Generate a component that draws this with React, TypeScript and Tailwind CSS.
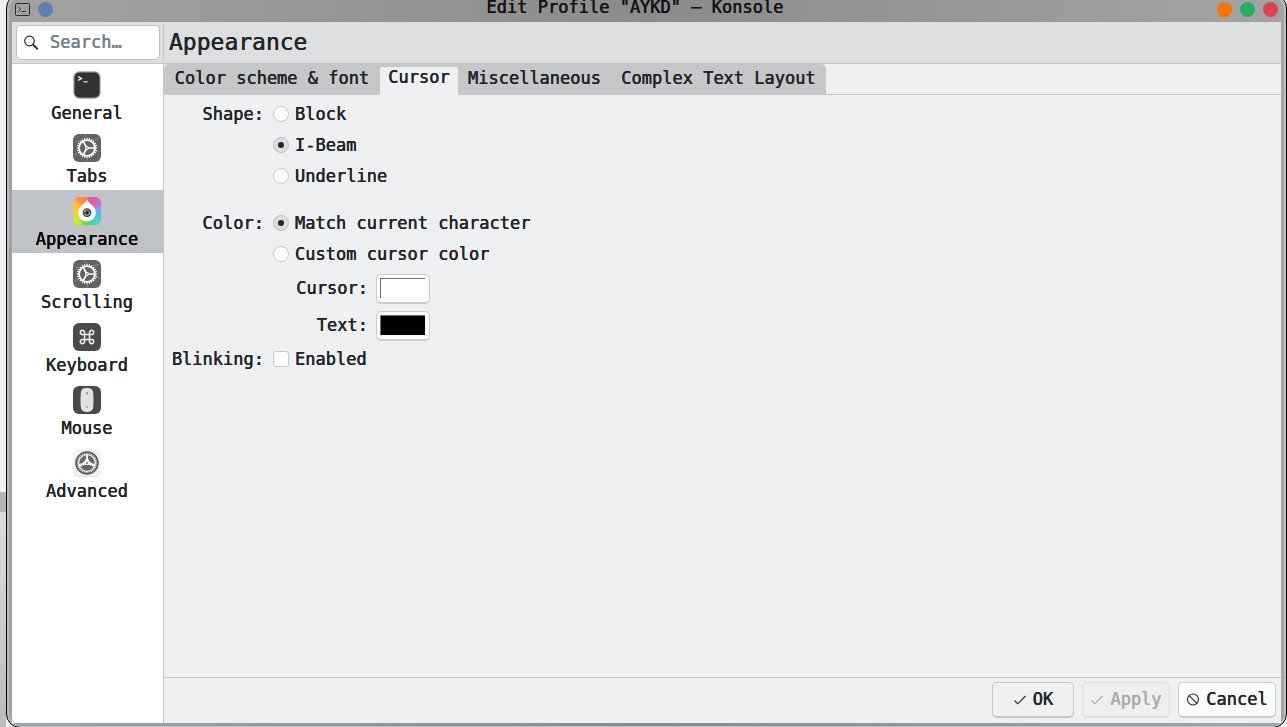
import React, { useState } from "react";

type IconProps = { className?: string };

function TerminalIcon() {
  return (
    <svg viewBox="0 0 28 28" className="size-7" aria-hidden="true">
      <rect x="0.3" y="0.3" width="27.4" height="27.4" rx="6" fill="#a3a3a3" />
      <rect x="1.5" y="1.5" width="25" height="25" rx="5" fill="#323232" />
      <path d="M5 5.6l3.6 1.9L5 9.4" fill="none" stroke="#f4f4f4" strokeWidth="1.2" />
      <path d="M10.3 10.8h4.4" stroke="#d6d6d6" strokeWidth="1.3" />
    </svg>
  );
}

function Teeth({ count, inner, outer, color, width }: { count: number; inner: number; outer: number; color: string; width: number }) {
  return (
    <g stroke={color} strokeWidth={width}>
      {Array.from({ length: count }, (_, i) => (
        <path key={i} d={`M14 ${14 - inner}V${14 - outer}`} transform={`rotate(${(i * 360) / count} 14 14)`} />
      ))}
    </g>
  );
}

function GearIcon() {
  return (
    <svg viewBox="0 0 28 28" className="size-7" aria-hidden="true">
      <rect width="28" height="28" rx="6" fill="#636363" />
      <g stroke="#8a8a8a" strokeWidth="0.9">
        <path d="M1 6.5l5 1.5M12 0.5l1 3M20 6l6-1.5M22 17l5 .8M14.5 24l-.5 3.5M1 21l5-2" />
      </g>
      <circle cx="14" cy="14" r="7.9" fill="none" stroke="#fff" strokeWidth="1.7" />
      <Teeth count={24} inner={8} outer={10.2} color="#fff" width={1.1} />
      <path d="M14 14h8M14 14l-4-6.9M14 14l-4 6.9" stroke="#fff" strokeWidth="1.7" />
      <circle cx="14" cy="14" r="1.9" fill="#fff" />
      <circle cx="14" cy="14" r="0.8" fill="#636363" />
    </svg>
  );
}

function PaletteIcon() {
  return (
    <svg viewBox="0 0 28 28" className="size-7" aria-hidden="true">
      <defs>
        <clipPath id="tile"><rect width="28" height="28" rx="6" /></clipPath>
        <filter id="soft" x="-30%" y="-30%" width="160%" height="160%"><feGaussianBlur stdDeviation="2.2" /></filter>
      </defs>
      <g clipPath="url(#tile)">
        <rect width="28" height="28" fill="#e9a04c" />
        <g filter="url(#soft)">
          <path d="M14 14L-6-6H14z" fill="#ff8a3c" />
          <path d="M14 14V-8H36z" fill="#ee4f9c" />
          <path d="M14 14L34-6V10z" fill="#b06fd8" />
          <path d="M14 14L36 8V26z" fill="#4cb8f0" />
          <path d="M14 14L36 26V36H20z" fill="#41dcc0" />
          <path d="M14 14L24 36H4z" fill="#55dd55" />
          <path d="M14 14L4 36H-8V16z" fill="#c8e83c" />
          <path d="M14 14L-8 20V-4z" fill="#ffc93a" />
        </g>
      </g>
      <path d="M14 2.8c1.6 2.8 4 4.4 6.2 6.400a8.900 8.900 0 1 1-12.400 0C10 7.200 12.400 5.600 14 2.800z" fill="#fff" />
      <circle cx="14" cy="15.6" r="4.3" fill="#333" />
      <g fill="none" strokeWidth="1.7">
        <path d="M11.4 15.6a2.6 2.6 0 0 1 1.8-2.5" stroke="#d9a441" />
        <path d="M13.5 13a2.6 2.6 0 0 1 2.9 1.5" stroke="#d64f94" />
        <path d="M16.5 15a2.6 2.6 0 0 1-1.5 3" stroke="#3eb4cf" />
        <path d="M14.6 18.2a2.6 2.6 0 0 1-3-1.8" stroke="#59b957" />
      </g>
      <circle cx="14" cy="15.6" r="1.1" fill="#262626" />
    </svg>
  );
}

function CommandIcon() {
  return (
    <svg viewBox="0 0 28 28" className="size-7" aria-hidden="true">
      <rect width="28" height="28" rx="6" fill="#4a4a4a" />
      <path
        d="M11.500 11.500h5v5h-5zM11.500 11.500H9.700a2.100 2.100 0 1 1 1.800-2zM16.500 11.500V9.500a2.100 2.100 0 1 1 1.800 2zM16.500 16.500h1.800a2.100 2.100 0 1 1-1.800 2zM11.500 16.500v2a2.100 2.100 0 1 1-1.800-2z"
        fill="none"
        stroke="#f5f5f5"
        strokeWidth="1.5"
      />
    </svg>
  );
}

function MouseIcon() {
  return (
    <svg viewBox="0 0 28 28" className="size-7" aria-hidden="true">
      <rect width="28" height="28" rx="6" fill="#4a4a4a" />
      <path d="M14 2c3.600 0 5.300 1 5.900 3.400.8 4 .8 13.200 0 17.200C19.300 25 17.600 26 14 26s-5.300-1-5.900-3.400c-.8-4-.8-13.200 0-17.200C8.700 3 10.400 2 14 2z" fill="#e3e3e3" />
      <path d="M14 6v2.600M14 20.300v1.500" stroke="#777" strokeWidth="1.2" />
    </svg>
  );
}

function AdvancedIcon() {
  return (
    <svg viewBox="0 0 28 28" className="size-7" aria-hidden="true">
      <rect y="0.5" width="28" height="27.5" rx="6" fill="#e0e0e0" />
      <rect width="28" height="27" rx="6" fill="#f3f3f3" />
      <circle cx="14" cy="14" r="11" fill="none" stroke="#5b5b5b" strokeWidth="1.6" />
      <g fill="#666">
        <path d="M13 6.200a7.800 7.800 0 0 0-6.600 8.800c2.300-.5 4.600-1.800 5.700-3.800.8-1.500 1.100-3 .9-5z" />
        <path d="M15 6.200a7.800 7.800 0 0 1 6.600 8.800c-2.300-.5-4.600-1.800-5.700-3.800-.8-1.500-1.100-3-.9-5z" />
        <path d="M7.400 18.100a7.800 7.800 0 0 0 13.200 0c-2-1.500-4.200-2.300-6.600-2.300s-4.600.8-6.600 2.300z" />
      </g>
      <Teeth count={32} inner={8.8} outer={10.6} color="#5b5b5b" width={1} />
      <circle cx="14" cy="14" r="1.7" fill="#f3f3f3" />
      <circle cx="14" cy="14" r="0.9" fill="#666" />
    </svg>
  );
}

function CheckIcon({ className }: IconProps) {
  return (
    <svg viewBox="0 0 14 14" className={className} aria-hidden="true">
      <path d="M1.500 8.500l3.300 3.300L12.500 4" fill="none" stroke="currentColor" strokeWidth="1.1" />
    </svg>
  );
}

function ForbiddenIcon({ className }: IconProps) {
  return (
    <svg viewBox="0 0 14 14" className={className} aria-hidden="true">
      <circle cx="7" cy="7.5" r="5.5" fill="none" stroke="currentColor" strokeWidth="1.1" />
      <path d="M3.100 3.600l7.800 7.800" stroke="currentColor" strokeWidth="1.1" />
    </svg>
  );
}

const PAGES = [
  { name: "General", Icon: TerminalIcon },
  { name: "Tabs", Icon: GearIcon },
  { name: "Appearance", Icon: PaletteIcon },
  { name: "Scrolling", Icon: GearIcon },
  { name: "Keyboard", Icon: CommandIcon },
  { name: "Mouse", Icon: MouseIcon },
  { name: "Advanced", Icon: AdvancedIcon },
];

const TABS = [
  { name: "Color scheme & font", width: "min-w-[216px]" },
  { name: "Cursor", width: "min-w-[78px]" },
  { name: "Miscellaneous", width: "min-w-[153px]" },
  { name: "Complex Text Layout", width: "min-w-[215px]" },
];

function Radio({ group, label, checked, onSelect }: { group: string; label: string; checked: boolean; onSelect: () => void }) {
  return (
    <label className="flex h-[31px] w-fit items-center gap-1.5">
      <span className="grid size-4 place-items-center">
        <input
          type="radio"
          name={group}
          checked={checked}
          onChange={onSelect}
          className="col-start-1 row-start-1 size-4 appearance-none rounded-full border border-[#c9cbcd] bg-[#fcfcfc] checked:border-[#bdc0c2] checked:bg-[#dcdfe1]"
        />
        {checked && <span className="pointer-events-none col-start-1 row-start-1 size-1.5 rounded-full bg-[#232629]" />}
      </span>
      {label}
    </label>
  );
}

function Swatch({ id, label, fill }: { id: string; label: string; fill: string }) {
  return (
    <div className="flex h-[37px] items-center gap-2">
      <label htmlFor={id} className="w-[95px] text-right">{label}</label>
      <button id={id} type="button" className="mb-0.5 flex h-[30px] w-[54px] self-end rounded-[5px] border border-b-2 border-[#cbcccd] bg-[#fcfcfc] p-[3px]">
        <span className={`h-5 w-[45px] border-t border-l border-[#6b6b70] ${fill}`} />
      </button>
    </div>
  );
}

export default function App() {
  const [page, setPage] = useState("Appearance");
  const [tab, setTab] = useState("Cursor");
  const [shape, setShape] = useState("I-Beam");
  const [color, setColor] = useState("Match current character");
  const [blink, setBlink] = useState(false);

  return (
    <div className="flex h-screen overflow-hidden bg-[#f1f1f1] font-['DejaVu_Sans_Mono',monospace] text-[17px] leading-6 text-[#232629] [text-shadow:0_0_0_currentColor,0_0_0_currentColor] [&_button]:[text-shadow:inherit] [&_input]:[text-shadow:inherit]">
      <div className="flex w-1.5 shrink-0 flex-col justify-end" aria-hidden="true">
        <div className="h-5 bg-[#b5b5b5]" />
        <div className="h-[215px] bg-linear-to-b from-[#dcdcdc] to-[#bcbcbc]" />
      </div>
      <div className="-mt-1.5 -mb-px flex min-w-0 flex-1 rounded-[14px] border border-black bg-[#b9c0c5]">
        <div className="mx-0.5 mt-0.5 mb-px flex min-w-0 flex-1 flex-col rounded-xl bg-linear-to-r from-[#a2a2a2] via-[#8b8b8b] via-50% to-[#a4a4a4] px-[3px] pb-[3px]">
          <header className="flex h-[25px] shrink-0 items-end gap-2 px-[3px] pb-[5px]">
            <svg viewBox="0 0 15 15" className="size-[15px]" aria-hidden="true">
              <rect x="0.5" y="1.5" width="14" height="12" rx="1" fill="none" stroke="#2c2c2c" />
              <path d="M3.300 5l2.400 2.300-2.400 2.300M6.700 9.500h4" fill="none" stroke="#2c2c2c" />
            </svg>
            <button type="button" aria-label="Pin" className="size-[15px] rounded-full bg-[#5d80ae]" />
            <h1 className="mb-[3px] flex-1 text-center leading-[14px] text-[#141414]">Edit Profile "AYKD" — Konsole</h1>
            <div className="flex gap-2">
              <button type="button" aria-label="Minimize" className="size-[15px] rounded-full bg-[#f67400]" />
              <button type="button" aria-label="Maximize" className="size-[15px] rounded-full bg-[#27ae60]" />
              <button type="button" aria-label="Close" className="size-[15px] rounded-full bg-[#da4453]" />
            </div>
          </header>

          <div className="flex h-[42px] shrink-0 border-b border-[#c3c5c7] bg-[#dedfe1]">
            <div className="my-0.5 flex w-[152px] items-center border-r border-[#c3c5c7] pr-[3px] pl-1">
              <label className="flex h-[35px] w-full items-center gap-[11px] rounded-[5px] border border-[#bfc1c3] bg-white pl-1.5">
                <svg viewBox="0 0 16 16" className="size-4 shrink-0" aria-label="Search">
                  <circle cx="6.5" cy="6" r="4.8" fill="none" stroke="#232629" strokeWidth="1.2" />
                  <path d="M10 9.500l4.800 4.800" stroke="#232629" strokeWidth="1.8" />
                </svg>
                <input type="search" placeholder="Search…" className="w-full min-w-0 bg-transparent pb-0.5 outline-none placeholder:text-[#75818c]" />
              </label>
            </div>
            <h2 className="flex items-center pb-0.5 pl-[5px] text-[23px] leading-7">Appearance</h2>
          </div>

          <div className="flex min-h-0 flex-1">
            <nav className="w-[152px] shrink-0 border-r border-[#c3c5c7] bg-white">
              {PAGES.map(({ name, Icon }) => (
                <button
                  key={name}
                  type="button"
                  onClick={() => setPage(name)}
                  className={`flex h-[63px] w-full flex-col items-center gap-0.5 pt-[7px] pr-px ${page === name ? "bg-[#bfc2c6] text-black" : ""}`}
                >
                  <Icon />
                  {name}
                </button>
              ))}
            </nav>

            <main className="flex min-w-0 flex-1 flex-col bg-[#eff0f1]">
              <div className="flex h-[31px] shrink-0">
                <div role="tablist" className="flex rounded-t-[5px] bg-[#c6c7c9]">
                  {TABS.map(({ name, width }) => (
                    <button
                      key={name}
                      role="tab"
                      type="button"
                      aria-selected={tab === name}
                      onClick={() => setTab(name)}
                      className={`${width} whitespace-nowrap ${tab === name ? "mt-[3px] rounded-t-[2px] bg-[#eff0f1] pb-2 leading-5" : "pb-1"}`}
                    >
                      {name}
                    </button>
                  ))}
                </div>
                <div className="flex-1 border-b border-[#c3c5c7]" />
              </div>

              <form className="grid flex-1 auto-rows-max grid-cols-[94px_1fr] content-start gap-x-[9px] pt-[3px] pl-1.5">
                <span className="text-right leading-[33px]">Shape:</span>
                <div role="radiogroup" aria-label="Shape" className="pb-4">
                  {["Block", "I-Beam", "Underline"].map((s) => (
                    <Radio key={s} group="shape" label={s} checked={shape === s} onSelect={() => setShape(s)} />
                  ))}
                </div>
                <span className="text-right leading-[33px]">Color:</span>
                <div role="radiogroup" aria-label="Color">
                  {["Match current character", "Custom cursor color"].map((c) => (
                    <Radio key={c} group="color" label={c} checked={color === c} onSelect={() => setColor(c)} />
                  ))}
                  <Swatch id="cursor-color" label="Cursor:" fill="bg-white" />
                  <Swatch id="text-color" label="Text:" fill="bg-black" />
                </div>
                <span className="text-right leading-[33px]">Blinking:</span>
                <label className="flex h-[31px] w-fit items-center gap-1.5">
                  <input
                    type="checkbox"
                    checked={blink}
                    onChange={(e) => setBlink(e.target.checked)}
                    className="size-4 appearance-none rounded-[3px] border border-[#c6c8ca] bg-[#fcfcfc] checked:bg-[#232629]"
                  />
                  Enabled
                </label>
              </form>

              <footer className="flex h-[46px] shrink-0 justify-end gap-2 border-t border-[#c3c5c7] pt-1 pr-[5px]">
                <button type="button" className="flex h-9 w-[82px] items-center justify-center gap-1.5 rounded-[5px] border border-b-2 border-[#c4c6c8] bg-[#eff0f1] pb-px">
                  <CheckIcon className="size-3.5" />
                  OK
                </button>
                <button type="button" disabled className="flex h-9 w-[88px] items-center justify-center gap-1.5 rounded-[5px] border border-b-2 border-[#dfe0e1] bg-[#eeefef] pb-px text-[#a9abac]">
                  <CheckIcon className="size-3.5" />
                  Apply
                </button>
                <button type="button" className="flex h-9 w-[98px] items-center justify-center gap-1.5 rounded-[5px] border border-b-2 border-[#cbcccd] bg-[#fcfcfc] pb-px">
                  <ForbiddenIcon className="size-3.5" />
                  Cancel
                </button>
              </footer>
            </main>
          </div>
        </div>
      </div>
    </div>
  );
}
